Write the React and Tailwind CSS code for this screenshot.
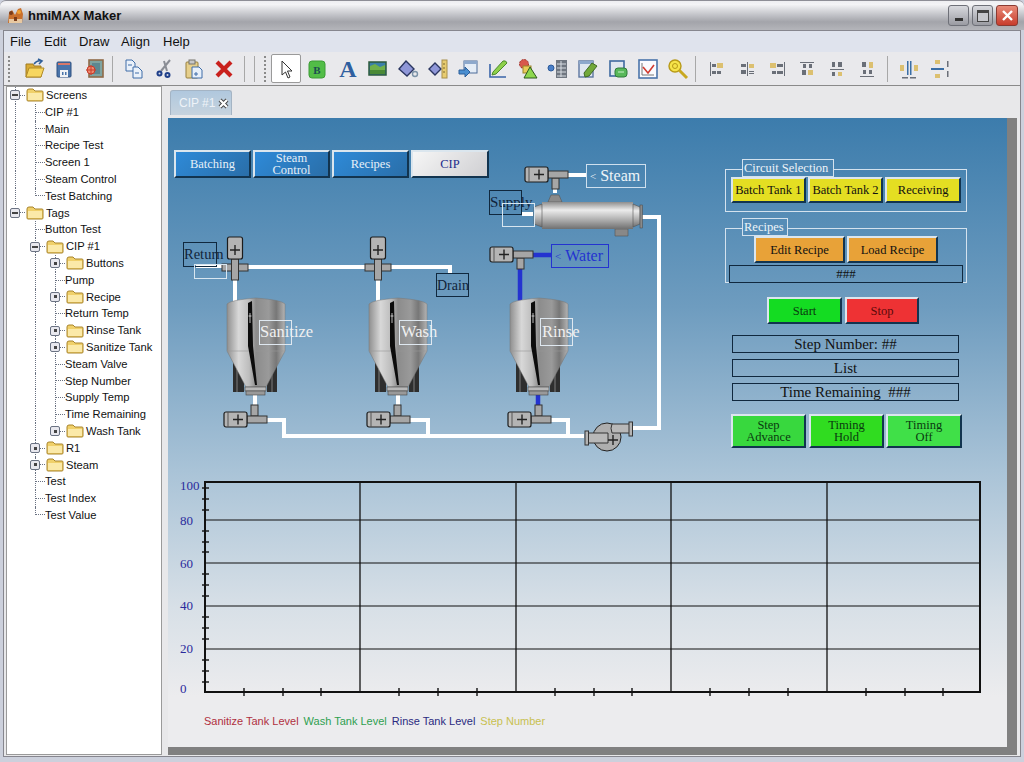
import React from 'react';

const TREE = [
  [0, 'Screens', 'minus', '', 'full'],
  [1, 'CIP #1', 'leaf', '1', 'full'],
  [1, 'Main', 'leaf', '1', 'full'],
  [1, 'Recipe Test', 'leaf', '1', 'full'],
  [1, 'Screen 1', 'leaf', '1', 'full'],
  [1, 'Steam Control', 'leaf', '1', 'full'],
  [1, 'Test Batching', 'leaf', '1', 'half'],
  [0, 'Tags', 'minus', '', 'none'],
  [1, 'Button Test', 'leaf', '0', 'full'],
  [1, 'CIP #1', 'minus', '0', 'full'],
  [2, 'Buttons', 'plus', '01', 'full'],
  [2, 'Pump', 'leaf', '01', 'full'],
  [2, 'Recipe', 'plus', '01', 'full'],
  [2, 'Return Temp', 'leaf', '01', 'full'],
  [2, 'Rinse Tank', 'plus', '01', 'full'],
  [2, 'Sanitize Tank', 'plus', '01', 'full'],
  [2, 'Steam Valve', 'leaf', '01', 'full'],
  [2, 'Step Number', 'leaf', '01', 'full'],
  [2, 'Supply Temp', 'leaf', '01', 'full'],
  [2, 'Time Remaining', 'leaf', '01', 'full'],
  [2, 'Wash Tank', 'plus', '01', 'none'],
  [1, 'R1', 'plus', '0', 'full'],
  [1, 'Steam', 'plus', '0', 'full'],
  [1, 'Test', 'leaf', '0', 'full'],
  [1, 'Test Index', 'leaf', '0', 'full'],
  [1, 'Test Value', 'leaf', '0', 'half'],
];

function Folder() {
  return (
    <svg width="18" height="14" viewBox="0 0 18 14" className="shrink-0">
      <path d="M1 3 Q1 1 3 1 H7 L9 3 H16 Q17 3 17 4 V12 Q17 13 16 13 H2 Q1 13 1 12 Z" fill="#f0d06a" stroke="#a8842c" />
      <path d="M2 5 H16 V12 H2 Z" fill="#fbe9a8" />
    </svg>
  );
}

function TreeRow({ label, kind, guides, line }) {
  return (
    <div className="flex h-[16.8px] items-center text-[11.2px] text-[#111] whitespace-nowrap">
      {guides.split('').map((g, i) => (
        <div key={i} className="h-full w-5 shrink-0">
          {g === '1' && <div className="ml-[10px] h-full border-l border-dotted border-gray-500" />}
        </div>
      ))}
      {kind === 'leaf' ? (
        <div className="h-full w-5 shrink-0">
          <div className={line === 'half' ? 'ml-[10px] flex h-1/2 items-end border-l border-dotted border-gray-500' : 'ml-[10px] flex h-full items-center border-l border-dotted border-gray-500'}>
            <div className="w-[9px] border-t border-dotted border-gray-500" />
          </div>
        </div>
      ) : (
        <>
          <div className="h-full w-5 shrink-0">
            <div className={line === 'full' ? 'ml-[10px] flex h-full items-center border-l border-dotted border-gray-500' : 'ml-[10px] flex h-full items-center border-l border-transparent'}>
              <div className="-ml-[6px] flex h-[10px] w-[10px] shrink-0 items-center justify-center rounded-[2px] border border-gray-500 bg-[#e8e8ee]">
                <div className={kind === 'minus' ? 'h-[2px] w-[6px] bg-[#444]' : 'h-[3px] w-[3px] bg-[#444]'} />
              </div>
              <div className="w-[5px] border-t border-dotted border-gray-500" />
            </div>
          </div>
          <div className="flex w-5 shrink-0 justify-center"><Folder /></div>
          <div className="w-px" />
        </>
      )}
      <span>{label}</span>
    </div>
  );
}

function Ico({ children }) {
  return <svg width="22" height="22" viewBox="0 0 22 22">{children}</svg>;
}

const IconOpen = () => (
  <Ico>
    <path d="M3 6 H10 L11 8 H18 V19 H3 Z" fill="#d9ab35" stroke="#a07a20" />
    <path d="M3 19 L6 10 H21 L18 19 Z" fill="#f7d65f" stroke="#b08a28" />
    <path d="M11 6 Q14 2 18 3 M15 1 L19 3 L16 6" fill="none" stroke="#2f5f99" strokeWidth="1.6" />
  </Ico>
);
const IconSave = () => (
  <Ico>
    <rect x="4" y="4" width="14" height="15" rx="1" fill="#4a74aa" stroke="#2f5080" />
    <rect x="5" y="5" width="12" height="2" fill="#d8786a" />
    <rect x="7" y="12" width="8" height="7" fill="#f1f3f6" />
    <rect x="9" y="14" width="1.5" height="3" fill="#4a74aa" />
    <rect x="12" y="14" width="1.5" height="3" fill="#4a74aa" />
  </Ico>
);
const IconTarget = () => (
  <Ico>
    <rect x="6" y="2" width="14" height="17" fill="#7fa3a0" stroke="#8f6a48" strokeWidth="1.6" />
    <rect x="9" y="5" width="8" height="11" fill="#5d8790" />
    <circle cx="8" cy="12" r="4" fill="#ef8a70" stroke="#c83a28" />
    <path d="M8 7 V17 M3 12 H13" stroke="#c83a28" />
  </Ico>
);
const IconCopy = () => (
  <Ico>
    <path d="M3 2 H9 L12 5 V13 H3 Z" fill="#eaf1fa" stroke="#3e6da8" />
    <path d="M10 9 H15 L19 13 V20 H10 Z" fill="#eaf1fa" stroke="#3e6da8" />
    <path d="M5 7 H9 M12 15 H16" stroke="#3e6da8" />
  </Ico>
);
const IconCut = () => (
  <Ico>
    <path d="M8 13 L17 2 M14 13 L11 3" stroke="#8a8d95" strokeWidth="2" />
    <circle cx="6.5" cy="15.5" r="3" fill="#1f3f8a" />
    <circle cx="14.5" cy="17" r="3" fill="#1f3f8a" />
    <circle cx="6.5" cy="15.5" r="1" fill="#d8dce8" />
    <circle cx="14.5" cy="17" r="1" fill="#d8dce8" />
  </Ico>
);
const IconPaste = () => (
  <Ico>
    <rect x="3" y="4" width="12" height="16" rx="1" fill="#e6cf8c" stroke="#97803f" />
    <rect x="6" y="2" width="6" height="4" fill="#c8c8c8" stroke="#77746a" />
    <path d="M9 9 H16 L19 12 V20 H9 Z" fill="#e8f0fa" stroke="#3e6da8" />
    <path d="M13 14 V18 M11 16 H15" stroke="#3e6da8" />
  </Ico>
);
const IconDelete = () => (
  <Ico>
    <path d="M4 4 L18 18 M18 4 L4 18" stroke="#c9201c" strokeWidth="4.2" />
  </Ico>
);
const IconPointer = () => (
  <Ico>
    <path d="M7 3 V17 L10.5 14 L13 20 L15 19 L12.5 13 H17 Z" fill="#fff" stroke="#333" strokeLinejoin="round" />
  </Ico>
);
const IconTag = () => (
  <Ico>
    <rect x="3" y="3" width="16" height="17" rx="3" fill="#52bd47" stroke="#3d9c36" />
    <text x="11" y="15.5" textAnchor="middle" fontSize="11" fontWeight="bold" fill="#1c4f50" fontFamily="Liberation Serif, serif">B</text>
  </Ico>
);
const IconImage = () => (
  <Ico>
    <rect x="2" y="4" width="17" height="13" fill="#3a7fa8" stroke="#2c5a3a" strokeWidth="1.5" />
    <path d="M3 8 L8 6 L13 9 L18 7 V16 H3 Z" fill="#6fb04a" />
    <path d="M3 12 H18 V16 H3 Z" fill="#4a8a36" />
  </Ico>
);
const IconFill = () => (
  <Ico>
    <path d="M9 3 L17 11 L10 18 L2 11 Z" fill="#8f97d8" stroke="#2a3560" strokeWidth="1.4" />
    <circle cx="18" cy="16" r="2.5" fill="none" stroke="#7c93a8" strokeWidth="1.4" />
  </Ico>
);
const IconRuler = () => (
  <Ico>
    <path d="M8 5 L14 11 L8 17 L2 11 Z" fill="#8f97d8" stroke="#2a3560" strokeWidth="1.4" />
    <rect x="15" y="2" width="5" height="18" fill="#e8cc70" stroke="#a8904a" />
    <path d="M16 6 H18 M16 10 H18 M16 14 H18" stroke="#7a6830" />
  </Ico>
);
const IconWindows = () => (
  <Ico>
    <rect x="7" y="3" width="13" height="12" fill="#e4ecf6" stroke="#4c6c9a" />
    <rect x="7" y="3" width="13" height="3" fill="#8da8cc" />
    <path d="M2 12 H8 V9 L13 14 L8 19 V16 H2 Z" fill="#4a8ed0" stroke="#2c5f9a" />
  </Ico>
);
const IconPencil = () => (
  <Ico>
    <path d="M6 14 L16 3 Q19 2 20 5 L9 16 L5 17 Z" fill="#8ed04a" stroke="#4a8a2c" />
    <path d="M3 6 V19 H19" fill="none" stroke="#3a64a8" strokeWidth="1.6" />
  </Ico>
);
const IconShapes = () => (
  <Ico>
    <circle cx="7" cy="6" r="4.5" fill="#d8584c" stroke="#a03028" strokeDasharray="2 1" />
    <rect x="6" y="8" width="8" height="7" fill="#e8cc58" stroke="#9a8428" />
    <path d="M13 9 L20 20 H7 Z" fill="#8ed84e" stroke="#2c5a1c" />
  </Ico>
);
const IconList = () => (
  <Ico>
    <circle cx="4" cy="10" r="3" fill="#4a7fc8" stroke="#2c5a9a" />
    <rect x="9" y="2" width="11" height="18" fill="#6f7680" />
    <path d="M10 6 H19 M10 10 H19 M10 14 H19 M10 18 H19 M14 3 V19" stroke="#d8dce2" />
  </Ico>
);
const IconBrush = () => (
  <Ico>
    <rect x="2" y="3" width="14" height="16" fill="#dfe6f0" stroke="#5c76a0" strokeWidth="1.4" />
    <rect x="2" y="3" width="14" height="3" fill="#8da8cc" />
    <path d="M8 19 L7 15 L15 5 L20 8 L12 18 Z" fill="#72a83a" stroke="#3f6a24" />
  </Ico>
);
const IconDbWindow = () => (
  <Ico>
    <rect x="3" y="3" width="14" height="15" fill="#dfe6f0" stroke="#3f6aa0" strokeWidth="1.6" />
    <rect x="8" y="10" width="12" height="9" rx="3" fill="#58b85a" stroke="#2f7a3a" />
    <path d="M11 14 H17" stroke="#c8f0c8" />
  </Ico>
);
const IconChart = () => (
  <Ico>
    <rect x="2" y="2" width="18" height="18" fill="#fafbff" stroke="#4a74aa" strokeWidth="1.6" />
    <path d="M5 17 H17 M5 5 V17" stroke="#777" />
    <path d="M6 9 L11 15 L17 7" fill="none" stroke="#d03a30" strokeWidth="1.6" />
  </Ico>
);
const IconKey = () => (
  <Ico>
    <circle cx="8" cy="8" r="6" fill="#f6e44a" stroke="#b89a18" strokeWidth="1.4" />
    <circle cx="8" cy="8" r="2.5" fill="none" stroke="#b89a18" />
    <path d="M12 12 L20 20" stroke="#c8a820" strokeWidth="3" />
  </Ico>
);

const D = '#6a6f78';
const T = '#dcc070';
const B = '#3a6ea5';
const ALIGN = [
  [[4, 4, 1, 14, D], [6, 6, 4, 3, D], [11, 5, 6, 5, T], [6, 13, 4, 3, D], [11, 13, 4, 3, D]],
  [[11, 4, 1, 14, D], [5, 6, 5, 3, D], [5, 12, 5, 4, D], [13, 6, 5, 4, T], [13, 13, 5, 1, D], [13, 15, 5, 1, D]],
  [[18, 4, 1, 14, D], [4, 5, 6, 5, T], [11, 6, 6, 3, D], [6, 13, 4, 3, D], [11, 13, 6, 3, D]],
  [[4, 4, 14, 1, D], [7, 6, 3, 4, D], [13, 6, 3, 4, D], [6, 12, 4, 5, D], [12, 12, 5, 5, T]],
  [[4, 11, 14, 1, D], [6, 4, 3, 5, D], [12, 4, 4, 5, D], [6, 14, 3, 4, D], [12, 14, 4, 4, T]],
  [[4, 18, 14, 1, D], [6, 4, 4, 5, D], [13, 4, 4, 6, T], [7, 12, 3, 4, D], [13, 12, 3, 4, D]],
];

function AlignIcon({ rects }) {
  return <Ico>{rects.map((r, i) => <rect key={i} x={r[0]} y={r[1]} width={r[2]} height={r[3]} fill={r[4]} />)}</Ico>;
}

const IconCenterV = () => (
  <Ico>
    <rect x="2" y="7" width="4" height="6" fill={T} />
    <rect x="16" y="7" width="4" height="6" fill={T} />
    <rect x="9" y="3" width="1.5" height="14" fill={B} />
    <rect x="12" y="3" width="1.5" height="14" fill={B} />
    <rect x="4" y="19" width="6" height="1.5" fill={D} />
    <rect x="12" y="19" width="6" height="1.5" fill={D} />
  </Ico>
);
const IconCenterH = () => (
  <Ico>
    <rect x="7" y="2" width="5" height="4" fill={T} />
    <rect x="7" y="16" width="5" height="4" fill={T} />
    <rect x="3" y="10" width="13" height="2" fill={B} />
    <rect x="19" y="3" width="1.5" height="6" fill={D} />
    <rect x="19" y="13" width="1.5" height="6" fill={D} />
  </Ico>
);

function Tool({ children, active }) {
  return (
    <div className={active ? 'flex h-[29px] w-[30px] shrink-0 items-center justify-center rounded-[2px] border border-[#9a9a9a] bg-white' : 'flex h-[29px] w-[30px] shrink-0 items-center justify-center'}>
      {children}
    </div>
  );
}

const Sep = ({ className }) => <div className={`h-[26px] w-px shrink-0 bg-[#a8a8a8] ${className}`} />;
const Grip = ({ className }) => <div className={`h-[26px] w-0 shrink-0 border-l-2 border-dotted border-[#8a8a8a] ${className}`} />;

function Toolbar() {
  return (
    <div className="flex h-[34px] shrink-0 items-center border-b border-[#8a8a8a] bg-[#e9e9ec] pl-[4px]">
      <Grip className="mr-[9px]" />
      <Tool><IconOpen /></Tool>
      <Tool><IconSave /></Tool>
      <Tool><IconTarget /></Tool>
      <Sep className="ml-[3px] mr-[6px]" />
      <Tool><IconCopy /></Tool>
      <Tool><IconCut /></Tool>
      <Tool><IconPaste /></Tool>
      <Tool><IconDelete /></Tool>
      <Sep className="ml-[5px] mr-[9px]" />
      <Sep className="mr-[9px]" />
      <Grip className="mr-[5px]" />
      <Tool active><IconPointer /></Tool>
      <div className="w-px" />
      <Tool><IconTag /></Tool>
      <div className="w-px" />
      <Tool><span className="font-['Liberation_Serif',serif] text-[24px] font-bold leading-none text-[#2f5f9f]">A</span></Tool>
      <Tool><IconImage /></Tool>
      <Tool><IconFill /></Tool>
      <Tool><IconRuler /></Tool>
      <Tool><IconWindows /></Tool>
      <Tool><IconPencil /></Tool>
      <Tool><IconShapes /></Tool>
      <Tool><IconList /></Tool>
      <Tool><IconBrush /></Tool>
      <Tool><IconDbWindow /></Tool>
      <Tool><IconChart /></Tool>
      <Tool><IconKey /></Tool>
      <Sep className="ml-[2px] mr-[6px]" />
      <Tool><AlignIcon rects={ALIGN[0]} /></Tool>
      <Tool><AlignIcon rects={ALIGN[1]} /></Tool>
      <Tool><AlignIcon rects={ALIGN[2]} /></Tool>
      <Tool><AlignIcon rects={ALIGN[3]} /></Tool>
      <Tool><AlignIcon rects={ALIGN[4]} /></Tool>
      <Tool><AlignIcon rects={ALIGN[5]} /></Tool>
      <Sep className="ml-[5px] mr-[6px]" />
      <Tool><IconCenterV /></Tool>
      <Tool><IconCenterH /></Tool>
    </div>
  );
}

function TitleBar() {
  return (
    <div className="flex h-[30px] shrink-0 items-center rounded-t-[6px] border-t border-[#8e8e96] bg-[linear-gradient(180deg,#eeeef1_0%,#f4f4f6_12%,#c6c7cc_45%,#a3a4aa_72%,#b4b5ba_100%)] pl-[7px] pr-[6px]">
      <svg width="17" height="17" viewBox="0 0 17 17" className="shrink-0">
        <path d="M1 16 L2 6 L5 3 L8 8 L11 2 L14 1 L16 7 L15 16 Z" fill="#c9702c" />
        <path d="M2 12 H15 V16 H2 Z" fill="#e8c8a0" />
        <circle cx="4" cy="6" r="2" fill="#7a3d1a" />
        <circle cx="12" cy="5" r="2" fill="#f0a030" />
        <path d="M7 10 H10 V14 H7 Z" fill="#7a3d1a" />
      </svg>
      <span className="ml-[4px] text-[13px] font-bold text-[#111]">hmiMAX Maker</span>
      <div className="ml-auto flex gap-[3px]">
        <div className="flex h-[21px] w-[21px] items-end justify-center rounded-[3px] border border-[#6e7078] bg-[linear-gradient(180deg,#d8d9de,#9a9ba2)] pb-[4px]">
          <div className="h-[3px] w-[8px] bg-[#333]" />
        </div>
        <div className="flex h-[21px] w-[21px] items-center justify-center rounded-[3px] border border-[#6e7078] bg-[linear-gradient(180deg,#d8d9de,#9a9ba2)]">
          <div className="h-[12px] w-[12px] border border-t-[3px] border-[#444] bg-[#c6c7cc]" />
        </div>
        <div className="flex h-[21px] w-[22px] items-center justify-center rounded-[3px] border border-[#8a3a32] bg-[linear-gradient(180deg,#e88a78,#c83c2c)]">
          <svg width="13" height="13" viewBox="0 0 13 13"><path d="M2 2 L11 11 M11 2 L2 11" stroke="#fff" strokeWidth="2.4" /></svg>
        </div>
      </div>
    </div>
  );
}

function MenuBar() {
  return (
    <div className="flex h-[21px] shrink-0 items-center bg-[#dfe3ed] pl-[6px] text-[13px] text-[#111]">
      <span className="w-[34px]">File</span>
      <span className="w-[35px]">Edit</span>
      <span className="w-[42px]">Draw</span>
      <span className="w-[42px]">Align</span>
      <span>Help</span>
    </div>
  );
}

function Tank({ x }) {
  return (
    <g transform={`translate(${x} 0)`}>
      <rect x="-23" y="360" width="11" height="32" fill="#2e2e2e" />
      <rect x="-20" y="360" width="2" height="32" fill="#555" />
      <rect x="11" y="360" width="10" height="32" fill="#2e2e2e" />
      <rect x="15" y="360" width="2" height="32" fill="#555" />
      <path d="M-29 304 Q-26 300 0 298 Q26 300 29 304 V351 L10 387 H-10 L-29 351 Z" fill="url(#tank)" stroke="#777" strokeWidth="0.5" />
      <path d="M-29 351 H29" stroke="#999" strokeWidth="0.6" />
      <path d="M-8 303 L-4 301 L-3 346 L1 385 L-1 385 L-8 346 Z" fill="#0c0c0c" />
      <path d="M-6 313 V323 M-7.5 316 H-4.5" stroke="#e8e8e8" strokeWidth="0.8" />
      <rect x="-11" y="387" width="21" height="4" fill="#b8b8b8" stroke="#444" strokeWidth="0.6" />
      <rect x="-10" y="391" width="19" height="4" fill="#999" stroke="#444" strokeWidth="0.6" />
    </g>
  );
}

function Plus({ x, y }) {
  return <path d={`M${x - 5} ${y} H${x + 5} M${x} ${y - 5} V${y + 5}`} stroke="#222" strokeWidth="1.4" />;
}

// motor on the left, T-piece on the right
function SideValve({ x, y, stem }) {
  return (
    <g transform={`translate(${x} ${y})`}>
      <rect x="27" y={stem === 'up' ? -11 : 7} width="7" height="11" fill="#a6a6a6" stroke="#333" />
      <rect x="23" y="0" width="20" height="7" fill="#a6a6a6" stroke="#333" />
      <rect x="0" y="-4" width="23" height="15" rx="2" fill="#b4b4b4" stroke="#1c1c1c" strokeWidth="1.2" />
      <path d="M4 -4 V11" stroke="#555" />
      <Plus x={14} y={3.5} />
    </g>
  );
}

function TopValve({ x }) {
  return (
    <g transform={`translate(${x} 0)`}>
      <rect x="-13" y="264" width="26" height="7" fill="#a6a6a6" stroke="#333" />
      <rect x="-3.5" y="259" width="7" height="21" fill="#a6a6a6" stroke="#333" />
      <rect x="-7.5" y="237" width="15" height="22" rx="2" fill="#b4b4b4" stroke="#1c1c1c" strokeWidth="1.2" />
      <Plus x={0} y={250} />
    </g>
  );
}

const YTICKS = [488, 499, 510, 531, 542, 552, 574, 585, 596, 617, 628, 639, 660, 671, 682];
const XTICKS = [244, 283, 321, 399, 438, 477, 555, 594, 632, 710, 749, 788, 866, 905, 943];
const YGRID = [520, 563, 606, 649];
const XGRID = [360, 516, 671, 827];
const YLABELS = [[100, 490], [80, 525], [60, 568], [40, 610], [20, 653], [0, 693]];

function Diagram() {
  return (
    <svg viewBox="168 118 839 629" className="absolute inset-0 h-full w-full">
      <defs>
        <linearGradient id="tank" x1="0" x2="1" y1="0" y2="0">
          <stop offset="0" stopColor="#8f8f8f" />
          <stop offset="0.2" stopColor="#d8d8d8" />
          <stop offset="0.38" stopColor="#bdbdbd" />
          <stop offset="0.5" stopColor="#8c8c8c" />
          <stop offset="0.72" stopColor="#9a9a9a" />
          <stop offset="0.85" stopColor="#777" />
          <stop offset="1" stopColor="#b4b4b4" />
        </linearGradient>
        <linearGradient id="shell" x1="0" x2="0" y1="0" y2="1">
          <stop offset="0" stopColor="#8e8e8e" />
          <stop offset="0.3" stopColor="#ececec" />
          <stop offset="0.65" stopColor="#b0b0b0" />
          <stop offset="1" stopColor="#707070" />
        </linearGradient>
      </defs>

      {/* pipes */}
      <g fill="none" stroke="#fff" strokeWidth="4">
        <path d="M196 266 H226 M248 267 H450 V273" />
        <path d="M235 280 V305 M378 280 V305" />
        <path d="M255 395 V406 M267 420 H284 V436 H584 M410 420 H428 V436 M551 420 H568 V436" />
        <path d="M632 428 H659 V217 H640" />
        <path d="M568 175 H586 M555 187 V193 M522 214 H533" />
        <path d="M398 395 V406" />
      </g>
      <g fill="none" stroke="#2433d0" strokeWidth="4.5">
        <path d="M533 255 H552 M520 267 V302 M538 395 V406" />
      </g>

      <Tank x={256} />
      <Tank x={398} />
      <Tank x={539} />
      <TopValve x={235} />
      <TopValve x={378} />
      <SideValve x={224} y={416} stem="up" />
      <SideValve x={367} y={416} stem="up" />
      <SideValve x={508} y={416} stem="up" />
      <SideValve x={525} y={171} stem="down" />
      <SideValve x={490} y={251} stem="down" />

      {/* heat exchanger */}
      <path d="M548 202 L551 195 H559 L562 202 Z" fill="#8a8a8a" stroke="#555" strokeWidth="0.6" />
      <path d="M615 229 H628 V236 H615 Z" fill="#888" stroke="#555" strokeWidth="0.6" />
      <path d="M542 202 H633 V229 H542 Z" fill="url(#shell)" />
      <path d="M534 207 L542 204 V227 L534 224 Z" fill="url(#shell)" stroke="#555" strokeWidth="0.6" />
      <path d="M633 204 L640 207 V224 L633 227 Z" fill="url(#shell)" stroke="#555" strokeWidth="0.6" />
      <rect x="640" y="205" width="2.5" height="23" fill="#8a8a8a" stroke="#444" strokeWidth="0.5" />

      {/* pump */}
      <circle cx="607" cy="437" r="14" fill="#aeaeae" stroke="#222" />
      <path d="M612 424 H630 V433 H612 Q610 428 612 424 Z" fill="#b8b8b8" stroke="#333" />
      <rect x="629" y="422" width="3.5" height="14" fill="#b4b4b4" stroke="#333" />
      <path d="M588 433 H608 V443 H588 Z" fill="#b8b8b8" stroke="#333" />
      <rect x="585" y="431" width="3.5" height="14" fill="#b4b4b4" stroke="#333" />
      <Plus x={613} y={440} />

      {/* chart */}
      <g stroke="#111">
        {YGRID.map(y => <path key={y} d={`M205 ${y} H980`} strokeWidth="1.2" />)}
        {XGRID.map(x => <path key={x} d={`M${x} 482 V692`} strokeWidth="1.3" />)}
        {YTICKS.map(y => <path key={y} d={`M202 ${y} H209`} strokeWidth="1.4" />)}
        {XTICKS.map(x => <path key={x} d={`M${x} 688 V696`} strokeWidth="1.4" />)}
        <rect x="205" y="482" width="775" height="210" fill="none" strokeWidth="2" />
      </g>
      {YLABELS.map(([v, y]) => (
        <text key={v} x="180" y={y} fontSize="13" fill="#2a2a9c" fontFamily="Liberation Serif, serif">{v}</text>
      ))}
    </svg>
  );
}

function HmiBtn({ className, children }) {
  return (
    <div className={`flex items-center justify-center border-2 border-b-[#12344f] border-l-[#dbe6ee] border-r-[#12344f] border-t-[#dbe6ee] text-center font-['Liberation_Serif',serif] text-[12.5px] leading-[12px] ${className}`}>
      {children}
    </div>
  );
}

function ReadOut({ children }) {
  return (
    <div className="ml-[7px] flex h-[18px] w-[227px] items-center justify-center border border-[#10283e] font-['Liberation_Serif',serif] text-[15px] text-[#111]">
      {children}
    </div>
  );
}

const LABEL = "absolute flex items-center whitespace-nowrap border font-['Liberation_Serif',serif]";

function Canvas() {
  return (
    <div className="relative h-[629px] w-[839px] overflow-hidden bg-[linear-gradient(180deg,#3c7cac_0%,#6e9cbf_30%,#a9c3d7_56%,#d8e0e7_78%,#ececee_92%)]">
      <Diagram />

      <div className="absolute left-[6px] top-[32px] flex gap-[2px] text-[#e6f0f8]">
        <HmiBtn className="h-[28px] w-[77px] bg-[linear-gradient(135deg,#2e8ad8,#2a6ea8)]">Batching</HmiBtn>
        <HmiBtn className="h-[28px] w-[77px] bg-[linear-gradient(135deg,#2e8ad8,#2a6ea8)]">Steam<br />Control</HmiBtn>
        <HmiBtn className="h-[28px] w-[77px] bg-[linear-gradient(135deg,#2e8ad8,#2a6ea8)]">Recipes</HmiBtn>
        <HmiBtn className="h-[28px] w-[78px] bg-[linear-gradient(135deg,#f6f6f6,#cfcfd2)] text-[#1c2c8c]">CIP</HmiBtn>
      </div>

      <div className={`${LABEL} left-[15px] top-[124px] h-[25px] w-[34px] border-[#10283e] text-[14.5px] text-[#10243a]`}>Return</div>
      <div className={`${LABEL} left-[26px] top-[146px] h-[15px] w-[33px] border-[#d8e6f0]`} />
      <div className={`${LABEL} left-[268px] top-[155px] h-[24px] w-[33px] border-[#10283e] text-[14px] text-[#10243a]`}>Drain</div>
      <div className={`${LABEL} left-[91px] top-[202px] h-[25px] w-[33px] border-[#dfe8f0] text-[16.5px] text-[#f0f0f0]`}>Sanitize</div>
      <div className={`${LABEL} left-[231px] top-[202px] h-[25px] w-[33px] border-[#dfe8f0] pl-[1px] text-[16.5px] text-[#f0f0f0]`}>Wash</div>
      <div className={`${LABEL} left-[372px] top-[200px] h-[28px] w-[33px] border-[#dfe8f0] pl-[1px] text-[16.5px] text-[#f0f0f0]`}>Rinse</div>
      <div className={`${LABEL} left-[321px] top-[72px] h-[25px] w-[33px] border-[#10283e] text-[15px] text-[#10243a]`}>Supply</div>
      <div className={`${LABEL} left-[334px] top-[85px] h-[24px] w-[33px] border-[#d8e6f0]`} />
      <div className={`${LABEL} left-[418px] top-[46px] h-[24px] w-[60px] gap-[4px] border-[#cfe0ee] pl-[3px] text-[16px] text-[#eef4f8]`}><span className="text-[11px]">&lt;</span>Steam</div>
      <div className={`${LABEL} left-[383px] top-[126px] h-[24px] w-[58px] gap-[4px] border-[#2433d0] pl-[3px] text-[16px] text-[#2433d0]`}><span className="text-[11px]">&lt;</span>Water</div>

      {/* control panel */}
      <div className="absolute left-[557px] top-[41px] flex w-[242px] flex-col">
        <div className="mt-[10px] h-[43px] border border-[#d4e2ee] px-[5px]">
          <div className="-mt-[11px] ml-[11px] flex h-[18px] w-[92px] items-center whitespace-nowrap border border-[#d4e2ee] bg-[#4c86b2] pl-px font-['Liberation_Serif',serif] text-[12.5px] text-[#eef4f8]">Circuit Selection</div>
          <div className="flex gap-[2px] text-[#111]">
            <HmiBtn className="h-[26px] w-[75px] whitespace-nowrap bg-[#e4de22]">Batch Tank 1</HmiBtn>
            <HmiBtn className="h-[26px] w-[76px] whitespace-nowrap bg-[#e4de22]">Batch Tank 2</HmiBtn>
            <HmiBtn className="h-[26px] w-[76px] whitespace-nowrap bg-[#e4de22]">Receiving</HmiBtn>
          </div>
        </div>
        <div className="mt-[16px] h-[55px] border border-[#d4e2ee] px-[5px]">
          <div className="-mt-[11px] ml-[11px] flex h-[18px] w-[46px] items-center border border-[#d4e2ee] bg-[#568db7] pl-px font-['Liberation_Serif',serif] text-[12.5px] text-[#eef4f8]">Recipes</div>
          <div className="ml-[23px] flex gap-[2px] text-[#111]">
            <HmiBtn className="h-[27px] w-[91px] bg-[#e8a238]">Edit Recipe</HmiBtn>
            <HmiBtn className="h-[27px] w-[91px] bg-[#e8a238]">Load Recipe</HmiBtn>
          </div>
          <div className="-ml-[2px] mt-[2px] flex h-[18px] w-[234px] items-center justify-center border border-[#10283e] font-['Liberation_Serif',serif] text-[13px] text-[#111]">###</div>
        </div>
        <div className="ml-[42px] mt-[14px] flex gap-[3px]">
          <HmiBtn className="h-[27px] w-[75px] bg-[#14dc22] text-[#0a3a10]">Start</HmiBtn>
          <HmiBtn className="h-[27px] w-[74px] bg-[#ee3234] text-[#5a0a0a]">Stop</HmiBtn>
        </div>
        <div className="mt-[11px] flex flex-col gap-[6px]">
          <ReadOut>Step Number: ##</ReadOut>
          <ReadOut>List</ReadOut>
          <ReadOut>Time Remaining &nbsp;###</ReadOut>
        </div>
        <div className="ml-[6px] mt-[13px] flex text-[#0a3a10]">
          <HmiBtn className="h-[34px] w-[75px] bg-[#38d83e]">Step<br />Advance</HmiBtn>
          <HmiBtn className="ml-[3px] h-[34px] w-[75px] bg-[#30dc20]">Timing<br />Hold</HmiBtn>
          <HmiBtn className="ml-[2px] h-[34px] w-[76px] bg-[#40e048]">Timing<br />Off</HmiBtn>
        </div>
      </div>

      <div className="absolute left-[36px] top-[595px] flex gap-[5px] whitespace-nowrap text-[11px]">
        <span className="text-[#b0303e]">Sanitize Tank Level</span>
        <span className="text-[#2fa050]">Wash Tank Level</span>
        <span className="text-[#2a2a80]">Rinse Tank Level</span>
        <span className="text-[#c8c050]">Step Number</span>
      </div>
    </div>
  );
}

export default function App() {
  return (
    <div className="flex h-[762px] w-[1024px] flex-col overflow-hidden bg-[#ccd0dc] font-['Liberation_Sans',sans-serif]">
      <TitleBar />
      <div className="mx-[3px] mb-[5px] flex min-h-0 flex-1 flex-col border border-[#86868e] bg-[#e8e8ea]">
        <MenuBar />
        <Toolbar />
        <div className="flex min-h-0 flex-1 gap-[6px] pl-[2px] pr-[3px] pb-[1px]">
          {/* project tree */}
          <div className="w-[156px] shrink-0 overflow-hidden border border-[#9a9a9a] bg-white">
            <div className="-ml-[2px]">
              {TREE.map((r, i) => <TreeRow key={i} label={r[1]} kind={r[2]} guides={r[3]} line={r[4]} />)}
            </div>
          </div>
          <div className="flex flex-1 flex-col">
            <div className="flex h-[32px] shrink-0 items-end pl-[2px]">
              <div className="mb-[3px] flex h-[25px] w-[62px] items-center gap-[2px] rounded-t-[3px] border border-b-0 border-[#a4b4c4] bg-[linear-gradient(180deg,#b0c8de,#c6d3de)] pl-[8px] text-[12px] text-[#eef3f8]">
                <span>CIP #1</span>
                <svg width="13" height="13" viewBox="0 0 13 13">
                  <path d="M3 3 L10 10 M10 3 L3 10" stroke="#444" strokeWidth="4" />
                  <path d="M3 3 L10 10 M10 3 L3 10" stroke="#fff" strokeWidth="2.2" />
                </svg>
              </div>
            </div>
            <div className="flex-1 bg-[#808080]"><Canvas /></div>
          </div>
        </div>
      </div>
    </div>
  );
}
